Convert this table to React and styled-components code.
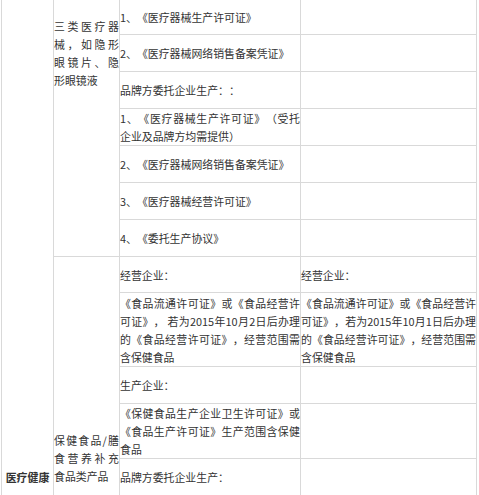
import React from "react";
import styled, { createGlobalStyle } from "styled-components";

const Global = createGlobalStyle`
  html, body { margin: 0; padding: 0; background: #fff; }
  body { font-family: "Noto Sans CJK SC", "Noto Sans", sans-serif; }
`;

const Viewport = styled.div`
  width: 479px;
  height: 495px;
  overflow: hidden;
  padding-left: 1px;
  box-sizing: border-box;
  background: #fff;
`;

const Grid = styled.div`
  display: grid;
  width: 476px;
  box-sizing: border-box;
  grid-template-columns: 51px 65px 180px 175px;
  grid-template-rows: 34px 36px 36px 36px 36px 36px 36px 35px 73px 36px 54px 36px;
  gap: 1px;
  padding: 0 1px;
  background: #d9d9d9;
`;

const Cell = styled.div`
  background: #fff;
  display: flex;
  flex-direction: column;
  justify-content: ${(p) => (p.$top != null ? "flex-start" : "center")};
  padding-top: ${(p) => (p.$top != null ? `${p.$top}px` : "0")};
  box-sizing: border-box;
  min-width: 0;
  overflow: hidden;
  font-size: 10.9px;
  line-height: 18px;
  color: #333;
  text-align: ${(p) => (p.$center ? "center" : "justify")};
  font-weight: ${(p) => (p.$bold ? 700 : 400)};
  text-spacing-trim: space-all;
  grid-column: ${(p) => p.$col};
  grid-row: ${(p) => p.$row};
  word-break: break-all;
`;

const long3 =
  "《食品流通许可证》或《食品经营许可证》， 若为2015年10月2日后办理的《食品经营许可证》，经营范围需含保健食品";
const long4 =
  "《食品流通许可证》或《食品经营许可证》，若为2015年10月1日后办理的《食品经营许可证》，经营范围需含保健食品";

const rows = [
  ["1、《医疗器械生产许可证》", ""],
  ["2、《医疗器械网络销售备案凭证》", ""],
  ["品牌方委托企业生产：：", ""],
  ["1、《医疗器械生产许可证》（受托企业及品牌方均需提供）", ""],
  ["2、《医疗器械网络销售备案凭证》", ""],
  ["3、《医疗器械经营许可证》", ""],
  ["4、《委托生产协议》", ""],
  ["经营企业：", "经营企业："],
  [long3, long4],
  ["生产企业：", ""],
  ["《保健食品生产企业卫生许可证》或《食品生产许可证》生产范围含保健食品", ""],
  ["品牌方委托企业生产：", ""],
];

export default function App() {
  return (
    <>
      <Global />
      <Viewport>
        <Grid>
          <Cell $col="1" $row="1 / span 12" $top={468} $bold $center>
            医疗健康
          </Cell>
          <Cell $col="2" $row="1 / span 7" $top={17}>
            三类医疗器械，如隐形眼镜片、隐形眼镜液
          </Cell>
          <Cell $col="2" $row="8 / span 5" $top={174}>
            保健食品/膳食营养补充食品类产品
          </Cell>
          {rows.map(([a, b], i) => (
            <React.Fragment key={i}>
              <Cell $col="3" $row={`${i + 1}`}>{a}</Cell>
              <Cell $col="4" $row={`${i + 1}`}>{b}</Cell>
            </React.Fragment>
          ))}
        </Grid>
      </Viewport>
    </>
  );
}
